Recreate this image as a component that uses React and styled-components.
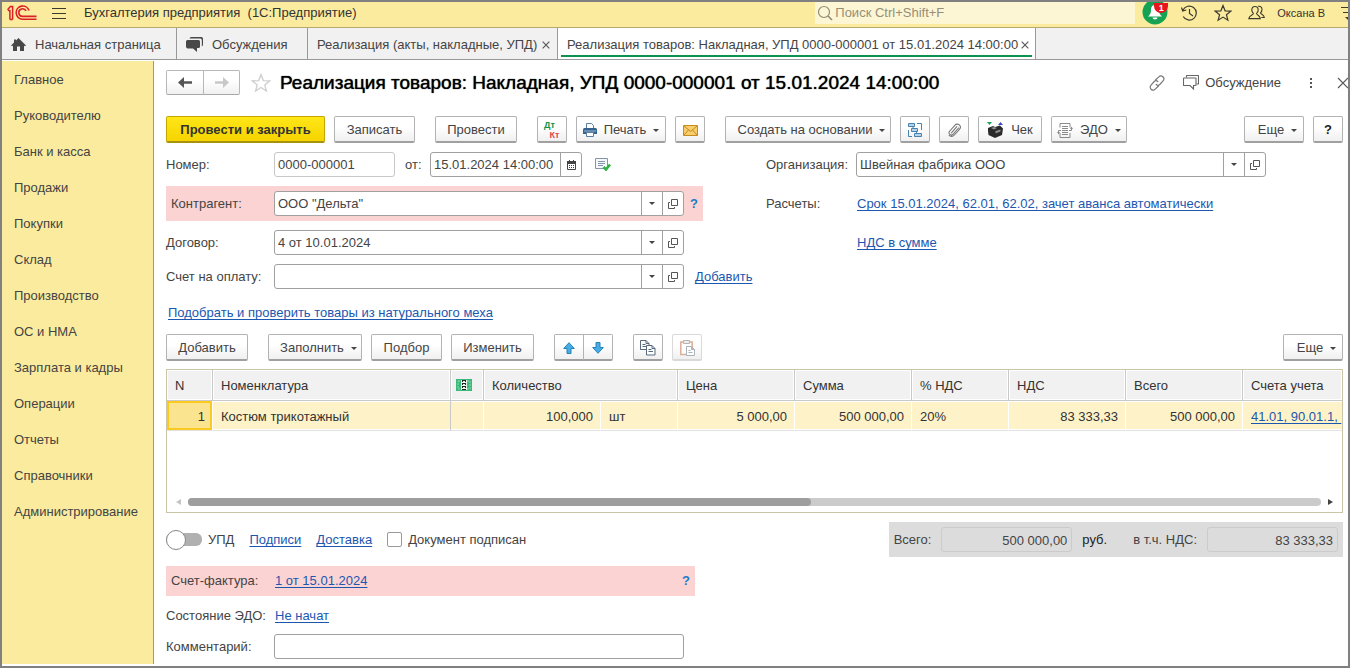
import React, { useState } from 'react';
import styled, { createGlobalStyle, css } from 'styled-components';


const sections = [
    'Главное',
    'Руководителю',
    'Банк и касса',
    'Продажи',
    'Покупки',
    'Склад',
    'Производство',
    'ОС и НМА',
    'Зарплата и кадры',
    'Операции',
    'Отчеты',
    'Справочники',
    'Администрирование',
]

const App = () => {
    return (
        <>
            <GlobalStyle />
            <Window>
                <TopBar />
                <TabBar />
                <Body>
                    <Sidebar />
                    <Document />
                </Body>
            </Window>
        </>
    )
}

const TopBar = () => {
    return (
        <TopBarWrapper>
            <LogoIcon />
            <PlainButton aria-label='Меню'><BurgerIcon /></PlainButton>
            <AppTitle>Бухгалтерия предприятия&nbsp; (1С:Предприятие)</AppTitle>
            <SearchBox>
                <SearchIcon />
                <input type='search' aria-label='Поиск' placeholder='Поиск Ctrl+Shift+F' />
            </SearchBox>
            <TopActions>
                <BellButton aria-label='Уведомления'>
                    <BellIcon />
                    <Badge>1</Badge>
                </BellButton>
                <PlainButton aria-label='История'><HistoryIcon /></PlainButton>
                <PlainButton aria-label='Избранное'><StarIcon size={18} color='#3c3a2e' /></PlainButton>
                <UserButton><UsersIcon />Оксана В</UserButton>
                <PlainButton aria-label='Настройки'><SettingsIcon /></PlainButton>
            </TopActions>
        </TopBarWrapper>
    )
}

const TabBar = () => {
    return (
        <TabBarWrapper>
            <Tab $width={175}>
                <button><HomeIcon />Начальная страница</button>
            </Tab>
            <Tab $width={131}>
                <button><ChatIcon />Обсуждения</button>
            </Tab>
            <Tab $width={250}>
                <button>Реализация (акты, накладные, УПД)</button>
                <PlainButton aria-label='Закрыть вкладку'><CrossIcon size={8} /></PlainButton>
            </Tab>
            <Tab $width={478} $active>
                <button>Реализация товаров: Накладная, УПД 0000-000001 от 15.01.2024 14:00:00</button>
                <PlainButton aria-label='Закрыть вкладку'><CrossIcon size={8} /></PlainButton>
            </Tab>
        </TabBarWrapper>
    )
}

const Sidebar = () => {
    return (
        <SidebarWrapper>
            { sections.map((title) => <a key={title} href='#'>{ title }</a>) }
        </SidebarWrapper>
    )
}

const Document = () => {
    return (
        <DocumentWrapper>
            <DocumentHeader />
            <Commands />
            <Details />
            <FurLink><a href='#'>Подобрать и проверить товары из натурального меха</a></FurLink>
            <GoodsCommands />
            <Goods />
            <Summary />
            <Footer />
        </DocumentWrapper>
    )
}

const DocumentHeader = () => {
    return (
        <HeaderWrapper>
            <ButtonGroup>
                <Button $width={38} $light aria-label='Назад'><BackIcon color='#555' /></Button>
                <Button $width={37} $light aria-label='Вперед'><ForwardIcon color='#c8c8c8' /></Button>
            </ButtonGroup>
            <PlainButton aria-label='В избранное'><StarIcon size={20} color='#cfcfcf' /></PlainButton>
            <h1>Реализация товаров: Накладная, УПД 0000-000001 от 15.01.2024 14:00:00</h1>
            <HeaderActions>
                <PlainButton aria-label='Ссылка'><ChainIcon /></PlainButton>
                <TalkButton><TalkIcon />Обсуждение</TalkButton>
                <PlainButton aria-label='Еще действия'><DotsIcon /></PlainButton>
                <PlainButton aria-label='Закрыть'><CrossIcon size={12} /></PlainButton>
            </HeaderActions>
        </HeaderWrapper>
    )
}

const Commands = () => {
    return (
        <Toolbar>
            <ToolGroup>
                <Button $width={159} $primary>Провести и закрыть</Button>
                <Button $width={81}>Записать</Button>
            </ToolGroup>
            <Button $width={82}>Провести</Button>
            <ToolGroup>
                <Button $width={30} aria-label='Дебет, кредит'>
                    <DtKt><span>Дт</span><span>Кт</span></DtKt>
                </Button>
                <Button $width={90}><PrinterIcon />Печать<Caret /></Button>
                <Button $width={30} aria-label='Отправить'><MailIcon /></Button>
            </ToolGroup>
            <ToolGroup>
                <Button $width={166}><span />Создать на основании<Caret /></Button>
                <Button $width={30} aria-label='Структура подчиненности'><StructureIcon /></Button>
                <Button $width={30} aria-label='Файлы'><ClipIcon /></Button>
                <Button $width={64}><CashIcon />Чек</Button>
                <Button $width={76}><EdoIcon />ЭДО<Caret /></Button>
            </ToolGroup>
            <ToolGroup $end>
                <Button $width={60}><span />Еще<Caret /></Button>
                <Button $width={30} $strong>?</Button>
            </ToolGroup>
        </Toolbar>
    )
}

const SelectField = ({ id, value }) => {
    return (
        <Field $width={410}>
            <input id={id} defaultValue={value} />
            <button aria-label='Выбрать'><Caret /></button>
            <button aria-label='Открыть'><OpenIcon /></button>
        </Field>
    )
}

const Details = () => {
    return (
        <DetailsWrapper>
            <Column>
                <Row>
                    <Label htmlFor='number'>Номер:</Label>
                    <Field $width={121} $soft>
                        <input id='number' defaultValue='0000-000001' />
                    </Field>
                    <ShortLabel htmlFor='date'>от:</ShortLabel>
                    <Field $width={152}>
                        <input id='date' defaultValue='15.01.2024 14:00:00' />
                        <button aria-label='Календарь'><CalendarIcon /></button>
                    </Field>
                    <StatusButton aria-label='Проведен'><PostedIcon /></StatusButton>
                </Row>
                <Row $marked>
                    <Label htmlFor='partner'>Контрагент:</Label>
                    <SelectField id='partner' value='ООО "Дельта"' />
                    <Help>?</Help>
                </Row>
                <Row>
                    <Label htmlFor='contract'>Договор:</Label>
                    <SelectField id='contract' value='4 от 10.01.2024' />
                </Row>
                <Row>
                    <Label htmlFor='bill'>Счет на оплату:</Label>
                    <SelectField id='bill' value='' />
                    <RowLink href='#'>Добавить</RowLink>
                </Row>
            </Column>
            <Column $labelWidth={90}>
                <Row>
                    <Label htmlFor='company'>Организация:</Label>
                    <SelectField id='company' value='Швейная фабрика ООО' />
                </Row>
                <Row $tall>
                    <Label as='span'>Расчеты:</Label>
                    <a href='#'>Срок 15.01.2024, 62.01, 62.02, зачет аванса автоматически</a>
                </Row>
                <Row>
                    <Label as='span' />
                    <a href='#'>НДС в сумме</a>
                </Row>
            </Column>
        </DetailsWrapper>
    )
}

const GoodsCommands = () => {
    return (
        <Toolbar $tight>
            <Button $width={82}>Добавить</Button>
            <ToolGroup>
                <Button $width={94}><span />Заполнить<Caret /></Button>
                <Button $width={71}>Подбор</Button>
                <Button $width={83}>Изменить</Button>
            </ToolGroup>
            <ButtonGroup>
                <Button $width={30} aria-label='Вверх'><ArrowIcon /></Button>
                <Button $width={30} aria-label='Вниз'><ArrowIcon down /></Button>
            </ButtonGroup>
            <ToolGroup>
                <Button $width={30} aria-label='Копировать'><CopyIcon /></Button>
                <Button $width={30} disabled aria-label='Вставить'><PasteIcon /></Button>
            </ToolGroup>
            <ToolGroup $end>
                <Button $width={60}><span />Еще<Caret /></Button>
            </ToolGroup>
        </Toolbar>
    )
}

const Goods = () => {
    return (
        <GoodsWrapper>
            <Table>
                <colgroup>
                    { [46, 238, 33, 117, 77, 117, 117, 97, 117, 117].map((width, i) => <Col key={i} $width={width} />) }
                    <col />
                </colgroup>
                <thead>
                    <tr>
                        <th>N</th>
                        <th>Номенклатура</th>
                        <th aria-label='Маркировка'><MoneyIcon /></th>
                        <th colSpan={2}>Количество</th>
                        <th>Цена</th>
                        <th>Сумма</th>
                        <th>% НДС</th>
                        <th>НДС</th>
                        <th>Всего</th>
                        <th>Счета учета</th>
                    </tr>
                </thead>
                <tbody>
                    <tr>
                        <Cell $right $current>1</Cell>
                        <Cell $divider>Костюм трикотажный</Cell>
                        <Cell />
                        <Cell $right>100,000</Cell>
                        <Cell>шт</Cell>
                        <Cell $right>5 000,00</Cell>
                        <Cell $right>500 000,00</Cell>
                        <Cell>20%</Cell>
                        <Cell $right>83 333,33</Cell>
                        <Cell $right>500 000,00</Cell>
                        <Cell><a href='#'>41.01, 90.01.1,&nbsp;</a></Cell>
                    </tr>
                </tbody>
            </Table>
            <Scroll>
                <Pointer $color='#c4c4c4' />
                <Track><Thumb /></Track>
                <Pointer $color='#444' $right />
            </Scroll>
        </GoodsWrapper>
    )
}

const Summary = () => {

    const [universal, setUniversal] = useState(false);
    const [signed, setSigned] = useState(false);

    return (
        <SummaryWrapper>
            <Switch>
                <input type='checkbox' checked={universal} onChange={() => setUniversal(!universal)} />
                УПД
            </Switch>
            <a href='#'>Подписи</a>
            <a href='#'>Доставка</a>
            <Check>
                <input type='checkbox' checked={signed} onChange={() => setSigned(!signed)} />
                Документ подписан
            </Check>
            <Totals>
                <label htmlFor='total'>Всего:</label>
                <Total id='total' readOnly value='500 000,00' />
                <Currency>руб.</Currency>
                <label htmlFor='vat'>в т.ч. НДС:</label>
                <Total id='vat' readOnly value='83 333,33' />
            </Totals>
        </SummaryWrapper>
    )
}

const Footer = () => {
    return (
        <FooterWrapper>
            <Invoice>
                <Label as='span'>Счет-фактура:</Label>
                <a href='#'>1 от 15.01.2024</a>
                <Help>?</Help>
            </Invoice>
            <Row>
                <Label as='span'>Состояние ЭДО:</Label>
                <a href='#'>Не начат</a>
            </Row>
            <Row>
                <Label htmlFor='comment'>Комментарий:</Label>
                <Field $width={410}>
                    <input id='comment' />
                </Field>
            </Row>
        </FooterWrapper>
    )
}

/* icons */

const LogoIcon = () => (
    <svg width='30' height='16' viewBox='0 0 30 16' fill='none' stroke='#dc1f26'>
        <path d='M.5 4.8 3.4 1.6h2.2V14.4M.8 5.4H2.9V14.4M5.6 14.4H2.9' strokeWidth='1.5' />
        <path d='M22 5.4A6.6 6.6 0 1 0 15.5 14.2H29.5' strokeWidth='1.6' />
        <path d='M19 5.9A3.8 3.8 0 1 0 15.5 11.4H29.5' strokeWidth='1.6' />
    </svg>
)

const BurgerIcon = () => (
    <svg width='14' height='12' viewBox='0 0 14 12' stroke='#3c3a2e'>
        <path d='M0 1.5h14M0 6.5h14M0 11.5h14' />
    </svg>
)

const SearchIcon = () => (
    <svg width='16' height='16' viewBox='0 0 16 16' fill='none' stroke='#8f8a72' strokeWidth='1.2'>
        <circle cx='7' cy='7' r='5.5' />
        <path d='m11 11 4 4' strokeWidth='1.6' />
    </svg>
)

const BellIcon = () => (
    <svg width='26' height='24' viewBox='0 0 26 24'>
        <circle cx='13' cy='11' r='12.5' fill='#16a253' />
        <path d='M13 4c-3 0-4 2.200-4 5 0 3-1 5-3 6.500h14c-2-1.500-3-3.500-3-6.500 0-2.800-1-5-4-5zM10.500 16.500h5a2.500 2 0 0 1-5 0z' fill='#fff' />
    </svg>
)

const HistoryIcon = () => (
    <svg width='18' height='16' viewBox='0 0 18 16' fill='none' stroke='#3c3a2e' strokeWidth='1.2'>
        <path d='M3 5A7 7 0 1 1 3.200 11.500M1.500 2.500 2.700 6 6.300 5M9.500 4v4.500l3.500 2.500' />
    </svg>
)

const StarIcon = ({ size, color }) => (
    <svg width={size} height={size} viewBox='0 0 18 18' fill='none' stroke={color} strokeWidth='1.200'>
        <path d='m9 1.500 2.100 5.300 5.700.3-4.400 3.600 1.500 5.500L9 13.100l-4.900 3.100 1.500-5.500L1.200 7.100l5.700-.3z' />
    </svg>
)

const UsersIcon = () => (
    <svg width='17' height='16' viewBox='0 0 17 16' fill='none' stroke='#3c3a2e' strokeWidth='1.100'>
        <path d='M7 1.500c-2 0-3.200 1.400-3.200 3.500 0 1.500.7 2.600 1.600 3.400.3 1.600-4.400 1.600-4.600 5.200h11.500c-.2-3.600-4-3.600-3.700-5.200.9-.8 1.600-1.900 1.600-3.400 0-2.100-1.200-3.500-3.200-3.500z' />
        <path d='M10 1.300c2.500-.5 4 1.100 4 3.200 0 1.500-.6 2.500-1.500 3.300-.1 1.500 3.500 1.700 3.800 4.700h-3' />
    </svg>
)

const SettingsIcon = () => (
    <svg width='14' height='14' viewBox='0 0 14 14' stroke='#3c3a2e' strokeWidth='1.200'>
        <path d='M0 1.500h14M2 6.500h10' />
        <path d='M4 11h6l-3 3z' fill='#3c3a2e' stroke='none' />
    </svg>
)

const HomeIcon = () => (
    <svg width='15' height='14' viewBox='0 0 15 14' fill='#484848'>
        <path d='M7.500 0 15 7.500l-1.200.8-.8-.7V13H9V8.500H6V13H2V7.600l-.8.7L0 7.500 3 4.600V1.500h2v1z' />
    </svg>
)

const ChatIcon = () => (
    <svg width='17' height='15' viewBox='0 0 17 15' fill='#484848'>
        <path d='M5 0h10.500Q17 .2 17 2v5.500q0 1.500-1.200 2V3q0-1.500-1.500-1.500H3.500Q3.800 0 5 0z' />
        <path d='M1.500 3h11Q14 3 14 4.500v5q0 1.500-1.500 1.500H11v4L7 11.500H1.500Q0 11 0 9.500v-5Q0 3 1.500 3z' />
    </svg>
)

const CrossIcon = ({ size }) => (
    <svg width={size} height={size} viewBox='0 0 12 12' fill='none' stroke='#5a5a5a' strokeWidth={14 / size}>
        <path d='m1 1 10 10M11 1 1 11' />
    </svg>
)

const BackIcon = ({ color }) => (
    <svg width='14' height='11' viewBox='0 0 14 11' fill={color}>
        <path d='M6 0v4.300h8v2.400H6V11L0 5.500z' />
    </svg>
)

const ForwardIcon = ({ color }) => (
    <svg width='14' height='11' viewBox='0 0 14 11' fill={color}>
        <path d='M8 0v4.300H0v2.400h8V11l6-5.500z' />
    </svg>
)

const ChainIcon = () => (
    <svg width='16' height='16' viewBox='0 0 16 16' fill='none' stroke='#777' strokeWidth='1.200' strokeLinecap='round'>
        <path d='M6.500 5 9.800 1.900a2.700 2.700 0 0 1 4.200 4L10.800 9.500a2.700 2.700 0 0 1-3.600 0' />
        <path d='M9.500 11 6.200 14.100a2.700 2.700 0 0 1-4.200-4L5.200 6.500a2.700 2.700 0 0 1 3.600 0' />
    </svg>
)

const TalkIcon = () => (
    <svg width='16' height='15' viewBox='0 0 16 15' fill='none' stroke='#666' strokeWidth='1.100'>
        <path d='M3.500 2.500V1q0-.5.500-.5h11q.5 0 .5.500v7.500q0 .5-.5.500h-1.500' />
        <path d='M1 3h11.500q.5 0 .5.500V10q0 .5-.5.500h-2V14L7 10.500H1q-.5 0-.5-.5V3.500Q.5 3 1 3z' />
    </svg>
)

const DotsIcon = () => (
    <svg width='4' height='12' viewBox='0 0 4 12' fill='#555'>
        <path d='M1 1h2v2H1zM1 5h2v2H1zM1 9h2v2H1z' />
    </svg>
)

const PrinterIcon = () => (
    <svg width='14' height='14' viewBox='0 0 14 14'>
        <path d='M3.500 6V.5h5l2 2V6' fill='#fff' stroke='#5d7f9f' />
        <path d='M1.500 5h11Q14 5 14 6.500V11H0V6.500Q0 5 1.500 5z' fill='#35638f' />
        <path d='M1 8h12' stroke='#9bb9d3' />
        <path d='M3.500 9.500h7v4h-7z' fill='#fff' stroke='#5d7f9f' />
    </svg>
)

const MailIcon = () => (
    <svg width='15' height='11' viewBox='0 0 15 11'>
        <path d='M.5.5h14v10H.5z' fill='#f7ce6b' stroke='#c68a1e' />
        <path d='m1 1 6.500 5.500L14 1M1 10l4.500-5M14 10 9.500 5' fill='none' stroke='#c68a1e' />
    </svg>
)

const StructureIcon = () => (
    <svg width='16' height='16' viewBox='0 0 16 16' fill='#b9d3e6' stroke='#4783b0'>
        <path d='M1.500 1.500h6v3h-6zM4.500 6.500h6v3h-6zM7.500 11.500h7v3h-7z' />
        <path d='M10 1.500h4.500V8M1.500 8v6.500H5M6 4.500v2M9.500 9.500v2' fill='none' />
    </svg>
)

const ClipIcon = () => (
    <svg width='16' height='16' viewBox='0 0 16 16' fill='none' stroke='#777' strokeWidth='1.100' strokeLinecap='round'>
        <path d='m12.500 6-5.700 6.500a2.300 2.300 0 0 1-3.400-3L9 3.200a3 3 0 0 1 4.600 3.900L8.400 13a3.800 3.800 0 0 1-5.200.4M10.800 4.700 5.500 10.800' />
    </svg>
)

const CashIcon = () => (
    <svg width='17' height='16' viewBox='0 0 17 16'>
        <path d='M0 0h5L2.500 3z' fill='#16a253' />
        <path d='M11 3h5L13.500 0z' fill='#3a49c4' />
        <path d='m1 6 5-2 2 1 5-1.500 3 3-1 6.500-7 3-6.500-3L1 9z' fill='#2a2a2a' />
        <path d='m4 6 3-1 3 1-3 1.500zM8.500 9l5-1.500v2l-5 2z' fill='#8d8d8d' />
    </svg>
)

const EdoIcon = () => (
    <svg width='16' height='15' viewBox='0 0 16 15' fill='none' stroke='#8a8a8a'>
        <path d='M3 4.500V.5h10v4M3 10v4.500h10V10M5 3.500h6M5 5.500h6M5 7.500h6M5 9.500h6M5 11.500h6' />
        <path d='M4 7.500H1.500V10M12 7.500h2.500V5' />
        <path d='M0 9h3l-1.500 2.500zM13 6h3l-1.500-2.500z' fill='#8a8a8a' stroke='none' />
    </svg>
)

const OpenIcon = () => (
    <svg width='10' height='10' viewBox='0 0 10 10' fill='none' stroke='#555'>
        <path d='M3.500.5h6v6h-6zM2 3.500H.5v6h6V8' />
    </svg>
)

const CalendarIcon = () => (
    <svg width='9' height='10' viewBox='0 0 9 10'>
        <path d='M.5 1.500h8v8h-8z' fill='#fff' stroke='#444' />
        <path d='M0 1h9v3H0zM2 0h1v1H2zM6 0h1v1H6z' fill='#444' />
        <path d='M2 5.500h5M2 7.500h5' stroke='#444' strokeDasharray='1 1' />
    </svg>
)

const PostedIcon = () => (
    <svg width='16' height='13' viewBox='0 0 16 13' fill='none'>
        <path d='M.5.5h12v10H.5z' fill='#f6f9fb' stroke='#8395a6' />
        <path d='M3 3.500h7M3 5.500h7M3 7.500h5' stroke='#8395a6' />
        <path d='m8.500 9 2.500 2.500L15 6.500' stroke='#2fb344' strokeWidth='2.600' />
    </svg>
)

const ArrowIcon = ({ down }) => (
    <svg width='12' height='12' viewBox='0 0 12 12' fill='#45aee8' stroke='#2d7fb0'>
        <path d={down ? 'M4 .5h4v5h3.300L6 11.300.7 5.500H4z' : 'M4 11.500h4v-5h3.300L6 .7.700 6.500H4z'} />
    </svg>
)

const CopyIcon = () => (
    <svg width='16' height='16' viewBox='0 0 16 16' fill='#fff' stroke='#566b7e'>
        <path d='M.5.5h5.500l3 3v6H.5zM6 .5v3h3M2.500 4.500h3M2.500 6.500h4' />
        <path d='M6.500 5.500H12l3 3v6.500H6.500zM12 5.500v3h3M8.500 9.500h3M8.500 11.500h4.500' />
    </svg>
)

const PasteIcon = () => (
    <svg width='15' height='16' viewBox='0 0 15 16' fill='#fff'>
        <path d='M.8 2h11.400v12.500H.8z' stroke='#dcae97' strokeWidth='1.500' />
        <path d='M3.500.5h6v3h-6z' fill='#eee' stroke='#b5b5b5' />
        <path d='M6.500 6.500h5l3 3v6h-8zM11.500 6.500v3h3M8.500 10.500h2M8.500 12.500h4' stroke='#a9b3bc' />
    </svg>
)

const MoneyIcon = () => (
    <svg width='16' height='12' viewBox='0 0 16 12'>
        <path d='M0 0h16v12H0z' fill='#3cb878' />
        <path d='M2 2h12v8H2z' fill='none' stroke='#8edab2' strokeDasharray='2 1' />
        <path d='M5 1h6v10H5z' fill='#e8f5ec' />
        <path d='M6.500 1v10M9.500 1v10' stroke='#222' strokeDasharray='2 1' />
        <path d='M6 1.500h4M7 4.500h2M7 7.500h2M6 10.500h4' stroke='#222' />
    </svg>
)

/* styles */

const GlobalStyle = createGlobalStyle`
    * {
        box-sizing: border-box;
    }

    body {
        margin: 0;
        background: #fff;
        color: #444;
        font: 13px/16px 'Liberation Sans', Arial, sans-serif;
    }

    button, input {
        font: inherit;
        color: inherit;
    }

    button {
        cursor: pointer;
    }

    svg {
        display: block;
        flex-shrink: 0;
    }

    a {
        color: #1c57b0;
        text-decoration: underline;
        text-decoration-skip-ink: none;
        text-underline-offset: 2px;
    }
`

const Window = styled.div`
    min-height: 100vh;
    display: flex;
    flex-direction: column;
    overflow: hidden;
    border: 2px solid #808080;
`

const PlainButton = styled.button`
    display: flex;
    align-items: center;
    padding: 0;
    border: 0;
    background: none;
`

const TopBarWrapper = styled.header`
    height: 26px;
    display: flex;
    align-items: center;
    padding: 0 0 4px 5px;
    overflow: hidden;
    background: #fbeb9e;
    border-bottom: 1px solid #b5a96c;
    color: #333;

    ${PlainButton} {
        flex-shrink: 0;
    }

    > ${PlainButton} {
        margin: 0 18px 0 15px;
    }
`

const AppTitle = styled.div`
    white-space: nowrap;
`

const SearchBox = styled.label`
    width: 320px;
    height: 22px;
    display: flex;
    align-items: center;
    margin-left: auto;
    padding-left: 2px;
    background: #fdf6d5;

    input {
        flex: 1;
        min-width: 0;
        padding: 0 2px;
        border: 0;
        outline: 0;
        background: none;
    }

    input::placeholder {
        color: #948f78;
        opacity: 1;
    }
`

const TopActions = styled.div`
    display: flex;
    align-items: center;
    gap: 16px;
    margin-left: 7px;
    margin-right: -7px;
`

const BellButton = styled(PlainButton)`
    position: relative;
    margin-right: -4px;
`

const Badge = styled.span`
    position: absolute;
    top: 2px;
    right: 0;
    width: 14px;
    height: 10px;
    border-radius: 0 0 7px 7px;
    background: #e8151c;
    color: #fff;
    font-size: 9px;
    font-weight: bold;
    line-height: 10px;
    text-align: center;
`

const UserButton = styled(PlainButton)`
    gap: 12px;
    font-size: 11px;
    white-space: nowrap;
`

const TabBarWrapper = styled.nav`
    height: 32px;
    display: flex;
    background: #f1f1f1;
    border-bottom: 1px solid #999;
`

const Tab = styled.div`
    width: ${({ $width }) => $width}px;
    display: flex;
    align-items: center;
    justify-content: space-between;
    padding: 2px 7px 0;
    border-right: 1px solid #999;
    white-space: nowrap;

    > button:first-child {
        display: flex;
        align-items: center;
        gap: 9px;
        padding: 0 3px 0 2px;
        border: 0;
        background: none;
    }

    ${({ $active }) => $active && css`
        position: relative;
        background: #fff;

        &::after {
            content: '';
            position: absolute;
            bottom: 2px;
            left: 3px;
            right: 3px;
            height: 2px;
            background: #0f9150;
        }
    `}
`

const Body = styled.div`
    flex: 1;
    display: flex;
    padding: 1px 0 2px;
`

const SidebarWrapper = styled.nav`
    width: 152px;
    flex-shrink: 0;
    display: flex;
    flex-direction: column;
    gap: 20px;
    padding: 11px 12px;
    background: #fbeb9e;
    border-right: 1px solid #a59b62;

    a {
        color: #444;
        text-decoration: none;
    }
`

const DocumentWrapper = styled.main`
    flex: 1;
    min-width: 0;
    padding: 9px 5px 5px 12px;
`

const HeaderWrapper = styled.div`
    display: flex;
    align-items: center;
    margin-bottom: 21px;

    > ${PlainButton} {
        margin: 0 9px 0 11px;
    }

    h1 {
        margin: 0;
        color: #000;
        font-size: 19px;
        font-weight: normal;
        line-height: 25px;
        white-space: nowrap;
        text-shadow: 0 0 1px #000;
    }
`

const HeaderActions = styled.div`
    display: flex;
    align-items: center;
    gap: 24px;
    margin-left: auto;
    margin-right: -6px;
`

const TalkButton = styled(PlainButton)`
    gap: 6px;
    margin: 0 4px 0 -6px;
`

const Button = styled.button`
    width: ${({ $width }) => $width}px;
    height: 27px;
    display: flex;
    align-items: center;
    justify-content: center;
    gap: 7px;
    padding: 2px 0 0;
    border: 1px solid #b3b3b3;
    border-bottom: 2px solid #a0a0a0;
    border-radius: 2px;
    background: linear-gradient(#fff 40%, #f0f0f0);
    white-space: nowrap;

    &:disabled {
        border-color: #d9d9d9;
    }

    ${({ $light }) => $light && css`
        height: 25px;
        padding: 0;
        border: 1px solid #b8b8b8;
        border-bottom-color: #a8a8a8;
    `}

    ${({ $primary }) => $primary && css`
        border-color: #c4a800;
        border-bottom-color: #a8920c;
        background: linear-gradient(#ffe617, #f5d400);
        color: #333;
        font-weight: bold;
    `}

    ${({ $strong }) => $strong && css`
        color: #222;
        font-weight: bold;
    `}
`

const ButtonGroup = styled.div`
    display: flex;

    ${Button}:first-child {
        border-radius: 2px 0 0 2px;
    }

    ${Button}:last-child {
        margin-left: -1px;
        border-radius: 0 2px 2px 0;
    }
`

const Toolbar = styled.div`
    display: flex;
    gap: 20px;
    margin-bottom: ${({ $tight }) => $tight ? 8 : 9}px;
`

const ToolGroup = styled.div`
    display: flex;
    gap: 9px;
    margin-left: ${({ $end }) => $end ? 'auto' : '0'};
`

const Caret = styled.span`
    border: solid transparent;
    border-width: 3px 3px 0;
    border-top-color: #444;
`

const DtKt = styled.span`
    display: flex;
    flex-direction: column;
    font-size: 9px;
    font-weight: bold;
    line-height: 10px;

    span:first-child {
        margin-right: 5px;
        color: #14924a;
    }

    span:last-child {
        margin-left: 5px;
        color: #e0474c;
    }
`

const DetailsWrapper = styled.div`
    display: grid;
    grid-template-columns: minmax(0, 600px) minmax(0, 1fr);
`

const Label = styled.label`
    width: 108px;
    flex-shrink: 0;
    white-space: nowrap;
`

const Column = styled.div`
    display: flex;
    flex-direction: column;
    gap: 9px;

    ${Label} {
        ${({ $labelWidth }) => $labelWidth && `width: ${$labelWidth}px;`}
    }
`

const Row = styled.div`
    min-height: ${({ $tall }) => $tall ? 35 : 25}px;
    display: flex;
    align-items: center;

    > a {
        margin-left: 1px;
    }

    ${({ $marked }) => $marked && css`
        align-self: flex-start;
        padding: 5px;
        background: #fbd3d3;

        ${Label} {
            width: 103px;
        }
    `}
`

const Field = styled.div`
    width: ${({ $width }) => $width}px;
    height: 25px;
    display: flex;
    border: 1px solid ${({ $soft }) => $soft ? '#c8c8c8' : '#a0a0a0'};
    border-radius: 3px;
    background: #fff;

    input {
        flex: 1;
        min-width: 0;
        padding: 1px 3px 0;
        border: 0;
        outline: 0;
        background: none;
    }

    button {
        width: 21px;
        display: flex;
        align-items: center;
        justify-content: center;
        padding: 0;
        border: 0;
        border-left: 1px solid #a0a0a0;
        background: none;
    }
`

const ShortLabel = styled.label`
    width: 35px;
    padding-left: 10px;
`

const StatusButton = styled(PlainButton)`
    margin-left: 13px;
`

const Help = styled.span`
    width: 14px;
    padding-left: 6px;
    color: #1c7cc4;
    font-weight: bold;
`

const RowLink = styled.a`
    && {
        margin-left: 11px;
    }
`

const FurLink = styled.div`
    padding: 16px 2px 13px;
`

const GoodsWrapper = styled.div`
    height: 144px;
    display: flex;
    flex-direction: column;
    justify-content: space-between;
    overflow: hidden;
    border: 1px solid #c9c5a6;
`

const Col = styled.col`
    width: ${({ $width }) => $width}px;
`

const Table = styled.table`
    width: 100%;
    table-layout: fixed;
    border-collapse: separate;
    border-spacing: 0;
    color: #333;

    th, td {
        overflow: hidden;
        white-space: nowrap;
        text-align: left;
    }

    th {
        height: 31px;
        padding: 2px 8px 0;
        border-right: 1px solid #c9c9c9;
        border-bottom: 1px solid #c9c9c9;
        background: #f1f1f1;
        box-shadow: inset 0 0 0 1px #fff;
        font-weight: normal;
    }

    th:nth-child(3) {
        padding: 0 0 0 5px;
    }

    th:last-child {
        border-right: 0;
    }
`

const Cell = styled.td`
    height: 30px;
    padding: 2px 7px 0 8px;
    border-right: 1px solid ${({ $divider }) => $divider ? '#c9c9c9' : '#fff'};
    border-bottom: 1px solid #e2e2e2;
    background: #fef2c8;
    box-shadow: inset 0 1px #fff, inset 0 -1px #fff;

    && {
        text-align: ${({ $right }) => $right ? 'right' : 'left'};
    }

    &:last-child {
        padding-right: 0;
        border-right: 0;
    }

    ${({ $current }) => $current && css`
        background: #fbe490;
        box-shadow: inset 0 0 0 2px #fbc91f;
    `}
`

const Scroll = styled.div`
    display: flex;
    align-items: center;
    gap: 7px;
    padding: 0 9px 6px;
`

const Pointer = styled.span`
    border: solid transparent;
    border-width: 3px 5px 3px 0;
    border-right-color: ${({ $color }) => $color};
    transform: ${({ $right }) => $right ? 'rotate(180deg)' : 'none'};
`

const Track = styled.div`
    flex: 1;
    height: 8px;
    border-radius: 4px;
    background: #cbcbcb;
`

const Thumb = styled.div`
    width: 55%;
    height: 8px;
    border-radius: 4px;
    background: #9e9e9e;
`

const SummaryWrapper = styled.div`
    display: flex;
    align-items: center;
    gap: 15px;
    margin: 9px 0;
`

const Switch = styled.label`
    display: flex;
    align-items: center;
    gap: 6px;

    input {
        appearance: none;
        width: 36px;
        height: 13px;
        display: flex;
        align-items: center;
        margin: 0;
        border-radius: 6px;
        background: #b0b0b0;
    }

    input::before {
        content: '';
        width: 20px;
        height: 20px;
        flex-shrink: 0;
        box-sizing: border-box;
        border: 1px solid #888;
        border-radius: 50%;
        background: #fff;
    }

    input:checked {
        justify-content: flex-end;
    }
`

const Check = styled.label`
    display: flex;
    align-items: center;
    gap: 6px;

    input {
        appearance: none;
        width: 15px;
        height: 15px;
        margin: 0;
        border: 1px solid #999;
        border-radius: 2px;
    }

    input:checked {
        background: #999;
    }
`

const Totals = styled.div`
    height: 35px;
    display: flex;
    align-items: center;
    margin-left: auto;
    padding: 0 5px;
    background: #dcdcdc;
`

const Total = styled.input`
    width: 131px;
    height: 25px;
    margin-left: 10px;
    padding: 1px 4px 0;
    border: 1px solid #cbcbcb;
    border-radius: 3px;
    background: none;
    text-align: right;
`

const Currency = styled.span`
    margin: 0 26px 0 10px;
    color: #222;
`

const FooterWrapper = styled.div`
    ${Row} + ${Row} {
        margin-top: 6px;
    }
`

const Invoice = styled.div`
    width: 529px;
    height: 30px;
    display: flex;
    align-items: center;
    margin-bottom: 7px;
    padding: 0 5px;
    background: #fbd3d3;

    ${Label} {
        width: 104px;
    }

    ${Help} {
        margin-left: auto;
    }
`


export default App;
